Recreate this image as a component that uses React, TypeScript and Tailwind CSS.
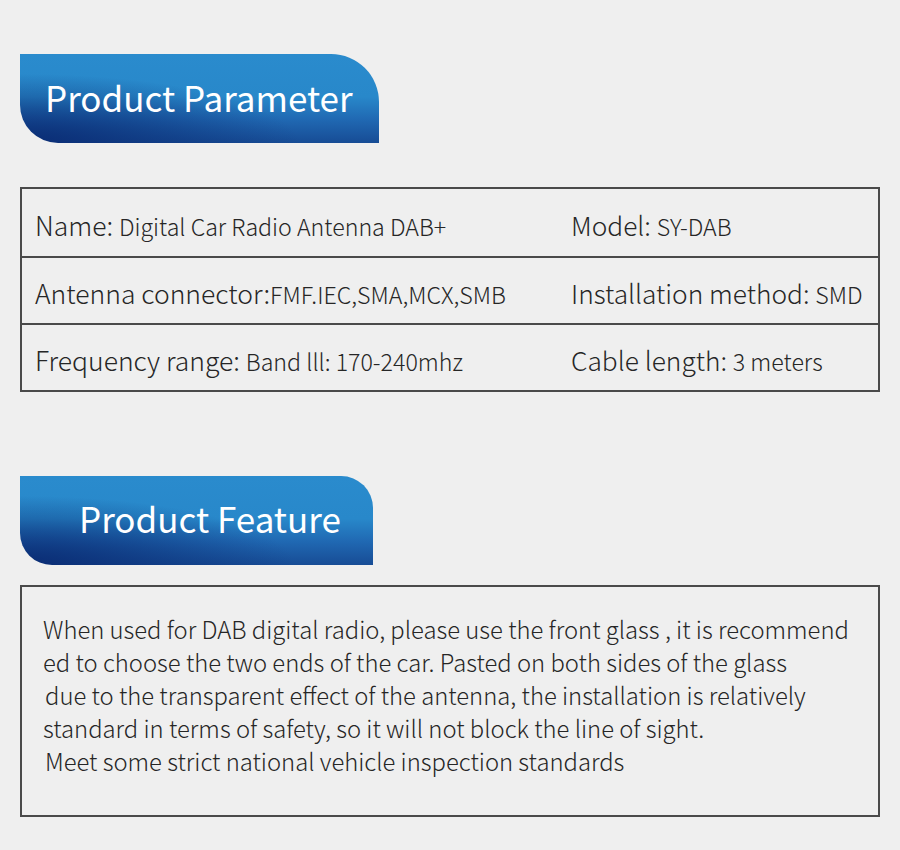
const font = { fontFamily: '"Noto Sans CJK SC", "Noto Sans", sans-serif' }

const rows = [
  { l: 'Name: ', lv: 'Digital Car Radio Antenna DAB+', r: 'Model: ', rv: 'SY-DAB' },
  { l: 'Antenna connector:', lv: 'FMF.IEC,SMA,MCX,SMB', r: 'Installation method: ', rv: 'SMD' },
  { l: 'Frequency range: ', lv: 'Band lll: 170-240mhz', r: 'Cable length: ', rv: '3 meters' },
]

// indent per line mirrors the slightly uneven left edge of the original copy
const feature = [
  { t: 'When used for DAB digital radio, please use the front glass , it is recommend', pad: '' },
  { t: 'ed to choose the two ends of the car. Pasted on both sides of the glass', pad: '' },
  { t: 'due to the transparent effect of the antenna, the installation is relatively', pad: 'pl-[2px]' },
  { t: 'standard in terms of safety, so it will not block the line of sight.', pad: '' },
  { t: 'Meet some strict national vehicle inspection standards', pad: 'pl-[2px]' },
]

function Banner({ title, wide }: { title: string; wide: boolean }) {
  return (
    <div
      className={
        wide
          ? 'flex h-[89px] w-[359px] items-center rounded-tr-[48px] rounded-bl-[38px] bg-[radial-gradient(ellipse_at_0%_100%,#0a2c74_0%,rgba(10,44,116,0)_55%),linear-gradient(180deg,#2a8bcd_0%,#2888ca_48%,#2068b2_74%,#174c95_100%)] pb-[5px] pl-[25px]'
          : 'flex h-[89px] w-[353px] items-center rounded-tr-[32px] rounded-bl-[32px] bg-[radial-gradient(ellipse_at_0%_100%,#0a2c74_0%,rgba(10,44,116,0)_55%),linear-gradient(180deg,#2a8bcd_0%,#2888ca_48%,#2068b2_74%,#174c95_100%)] pb-[6px] pl-[59px]'
      }
    >
      <span className="text-[35px] leading-none font-normal text-white">{title}</span>
    </div>
  )
}

export default function App() {
  return (
    <div style={font} className="h-[850px] w-[900px] bg-[#efefef] pt-[54px] font-light text-[#262626]">
      <div className="ml-[20px]">
        <Banner title="Product Parameter" wide />
      </div>

      <div className="mt-[44px] ml-[20px] w-[860px] border-2 border-[#4a4a4a]">
        {rows.map((row, i) => (
          <div
            key={i}
            className={
              'grid h-[67px] grid-cols-[549px_1fr] items-center pt-[4px] ' +
              (i > 0 ? 'border-t-2 border-[#4a4a4a]' : '')
            }
          >
            <div className="pl-[13px] whitespace-nowrap">
              <span className="text-[26.5px]">{row.l}</span>
              <span className="text-[23.2px]">{row.lv}</span>
            </div>
            <div className="whitespace-nowrap">
              <span className="text-[26.3px]">{row.r}</span>
              <span className="text-[23.2px]">{row.rv}</span>
            </div>
          </div>
        ))}
      </div>

      <div className="mt-[84px] ml-[20px]">
        <Banner title="Product Feature" wide={false} />
      </div>

      <div className="mt-[20px] ml-[20px] h-[232px] w-[860px] border-2 border-[#4a4a4a] pt-[25px] pl-[21px]">
        {feature.map((line, i) => (
          <p key={i} className={'text-[23.8px] leading-[33px] whitespace-nowrap ' + line.pad}>
            {line.t}
          </p>
        ))}
      </div>
    </div>
  )
}
